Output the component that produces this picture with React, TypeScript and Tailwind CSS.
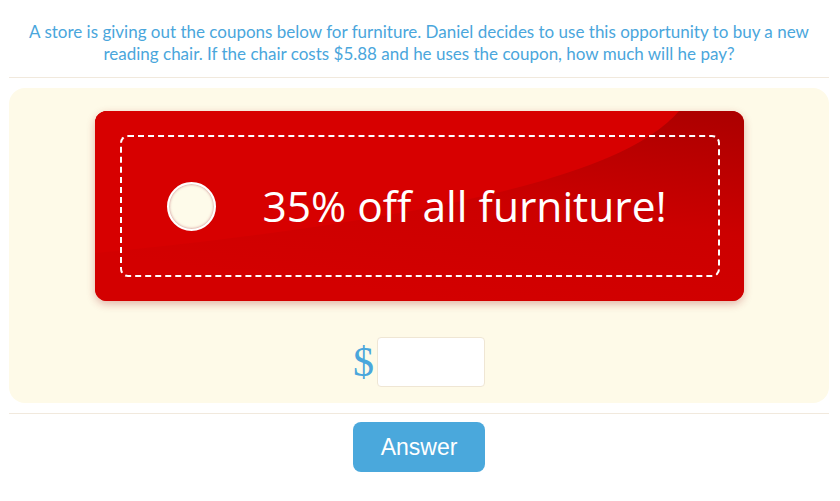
import React from "react";

function Coupon() {
  return (
    <div className="relative mx-auto h-[190px] w-[649px] overflow-hidden rounded-[12px] bg-[#d20000] shadow-[0_3px_8px_rgba(160,20,20,0.3)]">
      <svg className="absolute inset-0" width="649" height="190" viewBox="0 0 649 190">
        <defs>
          <linearGradient id="base" x1="1" y1="0" x2="0.55" y2="1">
            <stop offset="0" stopColor="#ab0000" />
            <stop offset="0.55" stopColor="#cc0000" />
            <stop offset="1" stopColor="#d30000" />
          </linearGradient>
        </defs>
        <rect width="649" height="190" fill="url(#base)" />
        <path d="M0 0 H584 C 545 45 430 100 0 142 Z" fill="#d70000" />
      </svg>
      <div className="relative m-[24px] ml-[25px] flex h-[142px] items-center rounded-[8px] border-2 border-dashed border-white">
        <div className="ml-[45px] h-[49px] w-[49px] shrink-0 rounded-full border-2 border-white bg-[#fefbea] shadow-[inset_0_0_3px_rgba(160,40,60,0.6)]" />
        <span className="ml-[47px] font-['Open_Sans',sans-serif] text-[42.5px] leading-none text-white">
          35% off all furniture!
        </span>
      </div>
    </div>
  );
}

export default function App() {
  return (
    <div className="min-h-screen bg-white">
      <div className="ml-[9px] mr-[11px]">
        <p className="px-2 pt-[21px] text-center font-['Lato',sans-serif] text-[17px] leading-[22px] text-[#4aa6dc]">
          A store is giving out the coupons below for furniture. Daniel decides to use this opportunity to buy a new
          reading chair. If the chair costs $5.88 and he uses the coupon, how much will he pay?
        </p>
        <div className="mt-[12px] h-px bg-[#f1e9dd]" />
        <div className="mt-[10px] rounded-[16px] bg-[#fefae8] pb-[16px] pt-[23px]">
          <Coupon />
          <div className="mt-[36px] flex items-center justify-center">
            <span className="mr-[3px] font-['Liberation_Serif',serif] text-[42px] leading-none text-[#4aa6dc]">$</span>
            <input
              type="text"
              className="h-[50px] w-[108px] rounded-[4px] border border-[#efe6d4] bg-white px-2 outline-none"
            />
          </div>
        </div>
        <div className="mt-[10px] h-px bg-[#f1e9dd]" />
        <div className="mt-[8px] flex justify-center">
          <button className="h-[50px] w-[132px] rounded-[8px] bg-[#4aa8dc] font-['Liberation_Sans',sans-serif] text-[23px] text-white">
            Answer
          </button>
        </div>
      </div>
    </div>
  );
}
